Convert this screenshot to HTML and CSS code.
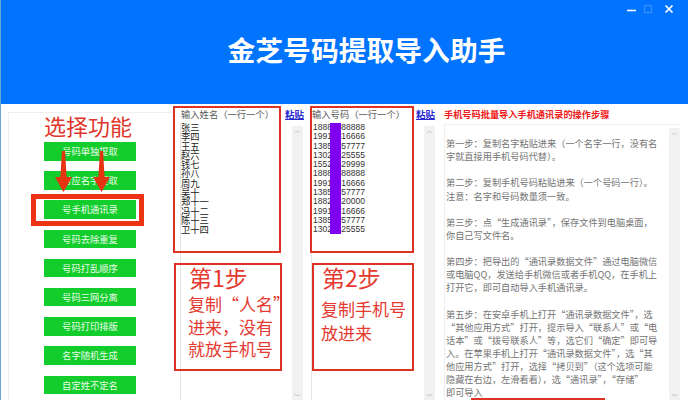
FILE: index.html
```html
<!DOCTYPE html>
<html lang="zh">
<head>
<meta charset="utf-8">
<title>金芝号码提取导入助手</title>
<link rel="stylesheet" href="styles.css">
</head>
<body>
<div class="window">
  <header class="titlebar">
    <h1 class="app-title">金芝号码提取导入助手</h1>
    <div class="controls">
      <svg class="ctl" width="10" height="10" viewBox="0 0 10 10"><path d="M0 6.500h9" stroke="#fff" stroke-width="1.600"/></svg>
      <svg class="ctl" width="10" height="10" viewBox="0 0 10 10"><rect x="1.500" y="1.500" width="7" height="7" fill="none" stroke="#2f8dff" stroke-width="1.400"/></svg>
      <svg class="ctl" width="10" height="10" viewBox="0 0 10 10"><path d="M1.500 1.500l7 7M8.500 1.500l-7 7" stroke="#fff" stroke-width="1.700"/></svg>
    </div>
  </header>

  <main class="content">
    <aside class="sidebar">
      <div class="sidebar-title">选择功能</div>
      <div class="menu">
        <div class="btn">号码单独提取</div>
        <div class="btn">对应名字提取</div>
        <div class="btn">号手机通讯录</div>
        <div class="btn">号码去除重复</div>
        <div class="btn">号码打乱顺序</div>
        <div class="btn">号码三网分离</div>
        <div class="btn">号码打印排版</div>
        <div class="btn">名字随机生成</div>
        <div class="btn">自定姓不定名</div>
      </div>
      <div class="frame-thick"></div>
      <svg class="arrows" width="60" height="42" viewBox="0 0 60 42">
        <path d="M7 0h3l1.600 26h5.400L8.500 41 0 26h5.400z" fill="#e63312"/>
        <path d="M45 0h3l1.600 26h5.400L46.500 41 38 26h5.400z" fill="#e63312"/>
      </svg>
    </aside>

    <section class="col col-names">
      <div class="col-head"><span class="label">输入姓名（一行一个）</span><a class="paste">粘贴</a></div>
      <div class="field">
        <div class="lines">张三<br>李四<br>王五<br>赵六<br>钱七<br>孙八<br>周九<br>吴十<br>郑十一<br>冯十二<br>陈十三<br>卫十四</div>
        <div class="scrollbar"><span class="chev">︿</span><span class="chev">﹀</span></div>
      </div>
      <div class="note note-input"></div>
      <div class="note note-step">
        <div class="step-title">第1步</div>
        <div class="step-text">复制“人名”<br>进来，没有<br>就放手机号</div>
      </div>
    </section>

    <section class="col col-nums">
      <div class="col-head"><span class="label">输入号码（一行一个）</span><a class="paste">粘贴</a></div>
      <div class="field">
        <div class="lines nums">18888888888<br>19916816666<br>13858857777<br>13026625555<br>15526629999<br>18888888888<br>19916816666<br>13858857777<br>18826620000<br>19916816666<br>13858857777<br>13026625555</div>
        <div class="mask"></div>
        <div class="scrollbar"><span class="chev">︿</span><span class="chev">﹀</span></div>
      </div>
      <div class="note note-input"></div>
      <div class="note note-step">
        <div class="step-title">第2步</div>
        <div class="step-text">复制手机号<br>放进来</div>
      </div>
    </section>

    <section class="guide">
      <div class="guide-head">手机号码批量导入手机通讯录的操作步骤</div>
      <div class="guide-panel">
        <div class="guide-text">第一步：复制名字粘贴进来（一个名字一行，没有名<br>字就直接用手机号码代替）。<br><br>第二步：复制手机号码粘贴进来（一个号码一行）。<br>注意：名字和号码数量须一致。<br><br>第三步：点“生成通讯录”，保存文件到电脑桌面，<br>你自己写文件名。<br><br>第四步：把导出的“通讯录数据文件”通过电脑微信<br>或电脑QQ，发送给手机微信或者手机QQ，在手机上<br>打开它，即可自动导入手机通讯录。<br><br>第五步：在安卓手机上打开“通讯录数据文件”，选<br>“其他应用方式”打开，提示导入“联系人”或“电<br>话本”或“拨号联系人”等，选它们“确定”即可导<br>入。在苹果手机上打开“通讯录数据文件”，选“其<br>他应用方式”打开，选择“拷贝到”（这个选项可能<br>隐藏在右边，左滑看看），选“通讯录”，“存储”<br>即可导入</div>
        <div class="scrollbar"><span class="chev">︿</span><span class="chev">﹀</span></div>
        <div class="note-bottom"></div>
      </div>
    </section>
  </main>
</div>
</body>
</html>
```
FILE: styles.css
```css
* { box-sizing: border-box; }
html, body { margin: 0; padding: 0; }
body {
  width: 688px;
  height: 400px;
  overflow: hidden;
  background: #fff;
  font-family: "Noto Sans CJK SC", "Liberation Sans", sans-serif;
}
.window {
  width: 688px;
  height: 400px;
  display: flex;
  flex-direction: column;
  border-left: 1px solid #6aa5dc;
  overflow: hidden;
}
.titlebar {
  position: relative;
  flex: 0 0 104px;
  background: #0073ff;
  display: flex;
  align-items: center;
  justify-content: center;
  padding: 0 0 6px 44px;
}
.app-title {
  margin: 0;
  color: #fff;
  font-size: 27.800px;
  font-weight: 700;
  line-height: 36px;
}
.controls {
  position: absolute;
  top: 4px;
  right: 14px;
  display: flex;
  gap: 6px;
}
.controls .ctl:last-child { margin-left: 5px; }
.content {
  flex: 1;
  display: flex;
  min-height: 0;
}
.sidebar {
  position: relative;
  flex: 0 0 165px;
  margin: 8px 0 0 7px;
  border-left: 1px solid #eee;
  border-top: 1px solid #eee;
  display: flex;
  flex-direction: column;
  align-items: flex-start;
  padding-left: 35px;
}
.sidebar-title {
  color: #e0372c;
  font-size: 22px;
  line-height: 26px;
  margin-top: -1px;
  white-space: nowrap;
}
.menu {
  display: flex;
  flex-direction: column;
  gap: 10.700px;
  margin-top: 4px;
}
.btn {
  width: 92px;
  height: 18.500px;
  background: #12cd2b;
  color: #e8fbe8;
  font-size: 9.300px;
  line-height: 18.500px;
  text-align: center;
}
.frame-thick {
  position: absolute;
  left: 22px;
  top: 81px;
  width: 113px;
  height: 32px;
  border: 5px solid #ee3314;
}
.arrows {
  position: absolute;
  left: 46px;
  top: 38px;
}
.col {
  position: relative;
  display: flex;
  flex-direction: column;
}
.col-names { flex: 0 0 132px; padding-left: 7px; }
.col-nums { flex: 0 0 131px; padding-left: 6px; }
.col-head {
  display: flex;
  justify-content: space-between;
  align-items: center;
  flex: 0 0 19px;
  padding: 0 1px;
}
.label {
  color: #5a5a5a;
  font-size: 9.300px;
  white-space: nowrap;
}
.paste {
  color: #2a2ad0;
  font-size: 9.500px;
  font-weight: 700;
  text-decoration: underline;
}
.field {
  position: relative;
  flex: 1;
  display: flex;
  justify-content: space-between;
  border-left: 1px solid #e6e6e6;
  min-height: 0;
}
.lines {
  color: #222;
  font-size: 9.300px;
  line-height: 9.300px;
  white-space: nowrap;
}
.nums {
  padding-left: 1px;
  font-family: "Liberation Sans", sans-serif;
  font-size: 8.500px;
  color: #333;
}
.mask {
  position: absolute;
  left: 18px;
  top: 0;
  width: 11px;
  height: 111px;
  background: #7f00ee;
}
.scrollbar {
  flex: 0 0 11px;
  margin-top: 3px;
  background: #f1f1f1;
  display: flex;
  flex-direction: column;
  justify-content: space-between;
  align-items: center;
  color: #aaa;
  font-size: 6px;
  line-height: 7px;
  overflow: hidden;
}
.col-names .scrollbar { margin-right: 2px; }
.col-nums .scrollbar { margin-right: 1px; }
.chev { display: block; }
.note {
  position: absolute;
  border: 2px solid #dd3322;
}
.col-names .note-input { left: 0; top: 2px; width: 108px; height: 147px; }
.col-nums .note-input { left: 5px; top: 2px; width: 104px; height: 147px; }
.col-names .note-step { left: 1px; top: 159px; width: 108px; height: 108px; padding-left: 13px; }
.col-nums .note-step { left: 7px; top: 159px; width: 102px; height: 108px; padding-left: 8px; }
.note-step { color: #e43a30; }
.step-title {
  font-size: 23px;
  line-height: 24px;
  white-space: nowrap;
}
.step-text {
  font-size: 17px;
  line-height: 22.500px;
  margin-top: 4px;
  margin-left: -1px;
  white-space: nowrap;
}
.col-nums .step-text { margin-top: 8px; line-height: 24px; }
.guide {
  flex: 1;
  min-width: 0;
  display: flex;
  flex-direction: column;
  margin-left: 8px;
  padding-right: 8px;
}
.guide-head {
  flex: 0 0 20px;
  padding-top: 3px;
  color: #f01818;
  font-size: 9.200px;
  font-weight: 700;
  line-height: 14px;
  white-space: nowrap;
}
.guide-panel {
  position: relative;
  flex: 1;
  display: flex;
  justify-content: space-between;
  border-left: 1px solid #eee;
  border-top: 1px solid #f2f2f2;
  min-height: 0;
  padding-left: 1px;
}
.guide-text {
  padding-top: 12px;
  color: #747474;
  font-size: 9.200px;
  line-height: 13.130px;
  white-space: nowrap;
}
.note-bottom {
  position: absolute;
  left: 26px;
  top: 273px;
  width: 134px;
  height: 20px;
  border: 2px solid #dd3322;
}
```
